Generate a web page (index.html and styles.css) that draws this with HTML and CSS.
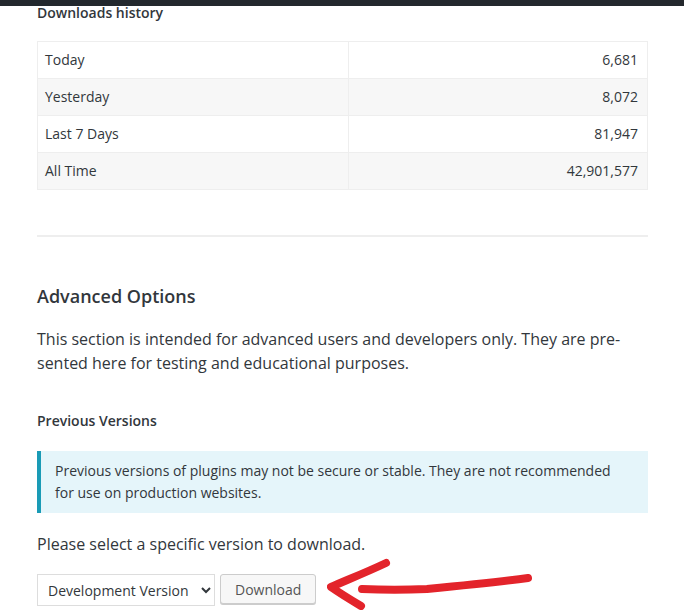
FILE: index.html
```html
<!DOCTYPE html>
<html lang="en">
<head>
    <meta charset="UTF-8">
    <meta name="viewport" content="width=device-width, initial-scale=1.0">
    <title>Advanced View</title>
    <link rel="stylesheet" href="styles.css">
</head>
<body>
    <div class="topbar"></div>

    <main class="content">
        <h3 class="section-title first">Downloads history</h3>

        <table class="stats">
            <tr><td class="label">Today</td><td class="num">6,681</td></tr>
            <tr><td class="label">Yesterday</td><td class="num">8,072</td></tr>
            <tr><td class="label">Last 7 Days</td><td class="num">81,947</td></tr>
            <tr><td class="label">All Time</td><td class="num">42,901,577</td></tr>
        </table>

        <hr class="divider">

        <h2 class="big-title">Advanced Options</h2>
        <p class="lead">This section is intended for advanced users and developers only. They are pre&shy;sented here for testing and educational purposes.</p>

        <h3 class="section-title">Previous Versions</h3>

        <div class="notice">
            <p>Previous versions of plugins may not be secure or stable. They are not recommended for use on production websites.</p>
        </div>

        <p class="lead pick">Please select a specific version to download.</p>

        <div class="versions">
            <div class="select-wrap">
                <select>
                    <option>Development Version</option>
                    <option>4.9.1</option>
                    <option>4.9.0</option>
                </select>
            </div>
            <button class="button">Download</button>

            <!-- hand-drawn arrow -->
            <svg class="arrow" width="215" height="52" viewBox="0 0 215 52">
                <path d="M201 20 C 170 24, 130 28, 100 31 C 80 32, 55 32, 35 31" />
                <path d="M59 5 C 40 14, 20 22, 4 29 C 14 36, 24 42, 34 48" />
            </svg>
        </div>
    </main>
</body>
</html>
```

FILE: styles.css
```css
body {
    margin: 0;
    font-family: 'Open Sans', 'Noto Sans', sans-serif;
    color: #32373c;
    background: #fff;
}

.topbar {
    height: 6px;
    background-color: #23282d;
}

.content {
    width: 611px;
    padding-left: 37px;
}

.section-title {
    margin: 36px 0 0;
    font-size: 14px;
    font-weight: 600;
    line-height: 20px;
    color: #32373c;
}

.section-title.first {
    margin-top: 0;
    line-height: 14px;
}

.stats {
    width: 100%;
    margin-top: 21px;
    border-collapse: collapse;
    font-size: 14px;
    line-height: 20px;
}

.stats td {
    padding: 8px 9px 8px 7px;
    border: 1px solid #eee;
}

.stats .label {
    width: 294px;
}

.stats tr:nth-child(even) td {
    background-color: #f7f7f7;
}

.stats .num {
    text-align: right;
}

.divider {
    margin: 45px 0 0;
    border: 0;
    border-top: 2px solid #eee;
}

.big-title {
    margin: 47px 0 0;
    font-size: 18px;
    font-weight: 600;
    line-height: 24px;
}

.lead {
    margin: 19px 0 0;
    font-size: 16px;
    line-height: 24px;
}

.notice {
    margin-top: 20px;
    padding: 9px 30px 9px 14px;
    border-left: 4px solid #1a9bb6;
    background-color: #e5f5fa;
}

.notice p {
    margin: 0;
    font-size: 14px;
    line-height: 22px;
}

.pick {
    margin-top: 19px;
}

.versions {
    display: flex;
    align-items: flex-start;
    margin-top: 18px;
}

.select-wrap select {
    width: 178px;
    height: 32px;
    padding: 0 4px 0 6px;
    font-family: inherit;
    font-size: 14px;
    color: #32373c;
    background-color: #fff;
    border: 1px solid #ddd;
    border-radius: 0;
}

.button {
    height: 30px;
    margin-left: 5px;
    padding: 0 14px;
    font-family: inherit;
    font-size: 14px;
    color: #555;
    background-color: #f7f7f7;
    border: 1px solid #ccc;
    border-radius: 3px;
    box-shadow: 0 1px 0 #ccc;
}

.arrow {
    margin: -16px 0 0 11px;
}

.arrow path {
    fill: none;
    stroke: #e3242b;
    stroke-width: 8;
    stroke-linecap: round;
    stroke-linejoin: round;
}
```
